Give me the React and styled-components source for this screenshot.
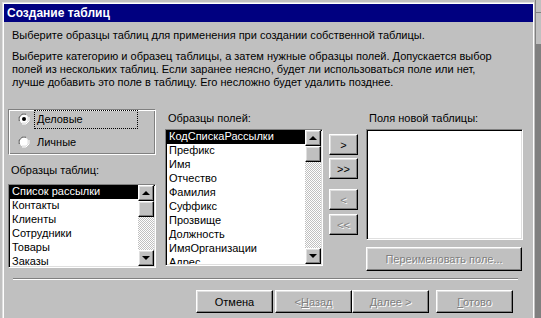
import React from "react";
import styled, { createGlobalStyle, css } from "styled-components";

const GlobalStyle = createGlobalStyle`
  html, body {
    margin: 0;
    padding: 0;
    background: #c0c0c0;
    overflow: hidden;
  }
  body {
    font-family: "Liberation Sans", Arial, sans-serif;
    font-size: 11px;
    color: #000;
  }
`;

const Screen = styled.div`
  display: flex;
  width: 541px;
  height: 318px;
  overflow: hidden;
  background: #c0c0c0;
`;

const Window = styled.div`
  margin: 2px 0 0 2px;
  width: 529px;
  height: 320px;
  border-top: 1px solid #dfdfdf;
  border-left: 1px solid #dfdfdf;
  border-right: 1px solid #fff;
  box-shadow: inset 1px 1px 0 #fff;
  padding: 1px 0 0 1px;
  display: flex;
  flex-direction: column;
`;

const Behind = styled.div`
  flex: 1;
  margin-left: 1px;
  display: flex;
  flex-direction: column;
  border-left: 1px solid #808080;
`;

const BehindTop = styled.div`
  height: 33px;
  border-top: 12px solid #c0c0c0;
  box-shadow: inset 0 1px 0 #808080, inset 0 -1px 0 #808080;
`;

const BehindRest = styled.div`
  flex: 1;
  background: #808080;
`;

const TitleBar = styled.div`
  height: 18px;
  background: #000080;
  color: #fff;
  font-weight: bold;
  font-size: 12px;
  display: flex;
  align-items: center;
  padding-left: 3px;
`;

const Body = styled.div`
  padding: 6px 0 0 8px;
`;

const Intro = styled.p`
  margin: 0 0 ${(p) => p.$gap || 0}px;
  line-height: ${(p) => p.$lh || 14}px;
  white-space: nowrap;
`;

const Main = styled.div`
  display: flex;
  align-items: flex-start;
  margin-top: 20px;
  margin-left: -4px;
`;

const Column = styled.div`
  display: flex;
  flex-direction: column;
  width: ${(p) => p.$width}px;
  margin-right: ${(p) => p.$gap || 0}px;
  padding-top: ${(p) => p.$top || 0}px;
`;

const Label = styled.div`
  line-height: 14px;
  padding-left: 3px;
  margin-bottom: ${(p) => p.$gap || 4}px;
`;

const GroupBox = styled.div`
  border: 1px solid;
  border-color: #808080 #fff #fff #808080;
  box-shadow: inset 1px 1px 0 #fff, inset -1px -1px 0 #808080;
  display: flex;
  flex-direction: column;
  gap: 5px;
  padding-left: 9px;
  box-sizing: border-box;
  height: 46px;
  margin-bottom: 8px;
`;

const RadioRow = styled.div`
  display: flex;
  align-items: center;
  height: 18px;
  gap: 5px;
`;

const RadioText = styled.span`
  padding: 2px 2px;
  width: 98px;
  line-height: 13px;
  outline: ${(p) => (p.$focus ? "1px dotted #000" : "none")};
`;

const ListBox = styled.div`
  height: ${(p) => p.$h}px;
  box-sizing: border-box;
  border: 1px solid;
  border-color: #808080 #fff #fff #808080;
  box-shadow: inset 1px 1px 0 #000, inset -1px -1px 0 #dfdfdf;
  background: #fff;
  padding: 0 1px 1px 0;
  display: flex;
  overflow: hidden;
`;

const Items = styled.div`
  flex: 1;
  overflow: hidden;
`;

const Item = styled.div`
  height: 14px;
  line-height: 12px;
  padding-left: 3px;
  white-space: nowrap;
  ${(p) =>
    p.$selected &&
    css`
      background: #000;
      color: #fff;
    `}
`;

const ScrollBar = styled.div`
  width: 16px;
  display: flex;
  flex-direction: column;
  background-color: #fff;
  background-image: repeating-conic-gradient(#c0c0c0 0 25%, #fff 0 50%);
  background-size: 2px 2px;
`;

const raised = css`
  background: #c0c0c0;
  border: 1px solid;
  border-color: #fff #000 #000 #fff;
  box-shadow: inset -1px -1px 0 #808080, inset 1px 1px 0 #dfdfdf;
  box-sizing: border-box;
`;

const ScrollButton = styled.div`
  ${raised};
  width: 16px;
  height: 16px;
  display: flex;
  align-items: center;
  justify-content: center;
  margin-top: ${(p) => (p.$bottom ? "auto" : "0")};
`;

const Thumb = styled.div`
  ${raised};
  width: 16px;
  height: 16px;
`;

const Triangle = styled.span`
  width: 0;
  height: 0;
  border-left: 4px solid transparent;
  border-right: 4px solid transparent;
  ${(p) =>
    p.$down
      ? css`
          border-top: 4px solid #000;
        `
      : css`
          border-bottom: 4px solid #000;
        `}
`;

const Button = styled.button`
  ${raised};
  font-family: inherit;
  font-size: 11px;
  font-weight: normal;
  width: ${(p) => p.$w || 77}px;
  height: ${(p) => p.$h || 23}px;
  padding: 0;
  color: #000;
  display: flex;
  align-items: center;
  justify-content: center;
  margin-top: ${(p) => p.$top || 0}px;
  margin-bottom: ${(p) => p.$gap || 0}px;
  margin-right: ${(p) => p.$right || 0}px;
  ${(p) =>
    p.$disabled &&
    css`
      color: #808080;
      text-shadow: 1px 1px 0 #fff;
    `}
`;

const Key = styled.span`
  text-decoration: underline;
`;

const Separator = styled.div`
  margin: 7px 0 0 1px;
  width: 505px;
  border-top: 1px solid #808080;
  border-bottom: 1px solid #fff;
`;

const Footer = styled.div`
  display: flex;
  padding-left: 184px;
  margin-top: 10px;
`;

const Radio = ({ checked }) => (
  <svg width="12" height="12" viewBox="0 0 12 12">
    <path d="M1 8V4l3-3h4" stroke="#808080" fill="none" />
    <path d="M2 8V4l2-2h4" stroke="#000" fill="none" />
    <circle cx="6" cy="6" r="4.5" fill="#fff" />
    <path d="M11 4v4l-3 3H4" stroke="#fff" fill="none" />
    <path d="M10 4v4l-2 2H4" stroke="#dfdfdf" fill="none" />
    {checked && <circle cx="6" cy="6" r="2" fill="#000" />}
  </svg>
);

const List = ({ items, height }) => (
  <ListBox $h={height}>
    <Items>
      {items.map((item, i) => (
        <Item key={item} $selected={i === 0}>
          {item}
        </Item>
      ))}
    </Items>
    <ScrollBar>
      <ScrollButton>
        <Triangle />
      </ScrollButton>
      <Thumb />
      <ScrollButton $bottom>
        <Triangle $down />
      </ScrollButton>
    </ScrollBar>
  </ListBox>
);

const tables = [
  "Список рассылки",
  "Контакты",
  "Клиенты",
  "Сотрудники",
  "Товары",
  "Заказы",
];

const fields = [
  "КодСпискаРассылки",
  "Префикс",
  "Имя",
  "Отчество",
  "Фамилия",
  "Суффикс",
  "Прозвище",
  "Должность",
  "ИмяОрганизации",
  "Адрес",
];

export default function App() {
  return (
    <>
      <GlobalStyle />
      <Screen>
        <Window>
          <TitleBar>Создание таблиц</TitleBar>
          <Body>
            <Intro $gap={8}>
              Выберите образцы таблиц для применения при создании собственной
              таблицы.
            </Intro>
            <Intro $lh={13}>
              Выберите категорию и образец таблицы, а затем нужные образцы
              полей. Допускается выбор
              <br />
              полей из нескольких таблиц. Если заранее неясно, будет ли
              использоваться поле или нет,
              <br />
              лучше добавить это поле в таблицу. Его несложно будет удалить
              позднее.
            </Intro>
            <Main>
              <Column $width={148} $gap={9}>
                <GroupBox>
                  <RadioRow>
                    <Radio checked />
                    <RadioText $focus>Деловые</RadioText>
                  </RadioRow>
                  <RadioRow>
                    <Radio />
                    <RadioText>Личные</RadioText>
                  </RadioRow>
                </GroupBox>
                <Label $gap={7}>Образцы таблиц:</Label>
                <List items={tables} height={84} />
              </Column>
              <Column $width={158} $gap={6} $top={2}>
                <Label>Образцы полей:</Label>
                <List items={fields} height={137} />
              </Column>
              <Column $width={29} $gap={8} $top={25}>
                <Button $w={29} $h={21} $gap={3}>
                  &gt;
                </Button>
                <Button $w={29} $h={21} $gap={10}>
                  &gt;&gt;
                </Button>
                <Button $w={29} $h={21} $gap={4} $disabled>
                  &lt;
                </Button>
                <Button $w={29} $h={21} $disabled>
                  &lt;&lt;
                </Button>
              </Column>
              <Column $width={157} $top={2}>
                <Label>Поля новой таблицы:</Label>
                <ListBox $h={111} />
                <Button $w={156} $h={24} $top={7} $disabled>
                  Переименовать поле...
                </Button>
              </Column>
            </Main>
            <Separator />
            <Footer>
              <Button $right={2}>Отмена</Button>
              <Button $disabled>
                &lt; <Key>Н</Key>азад
              </Button>
              <Button $disabled $right={7}>
                <Key>Д</Key>алее &gt;
              </Button>
              <Button $disabled>
                <Key>Г</Key>отово
              </Button>
            </Footer>
          </Body>
        </Window>
        <Behind>
          <BehindTop />
          <BehindRest />
        </Behind>
      </Screen>
    </>
  );
}
